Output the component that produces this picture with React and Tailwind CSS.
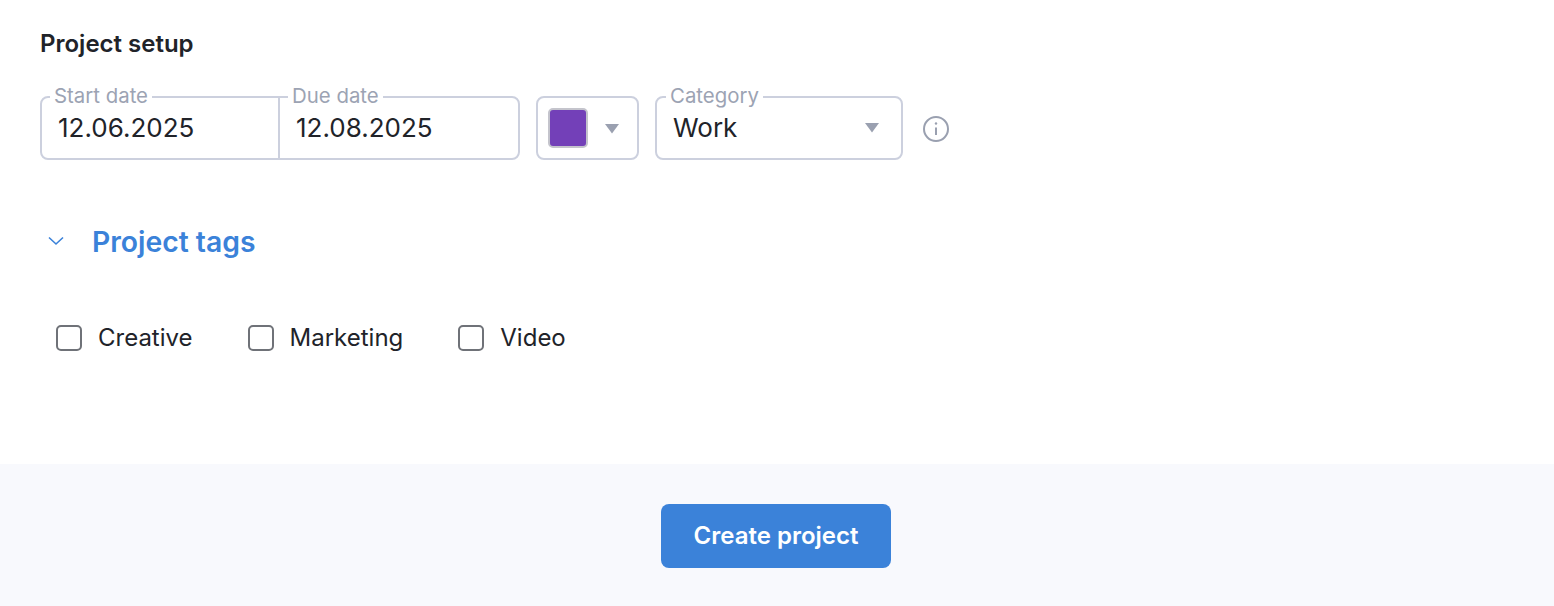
import React from "react";

const font = { fontFamily: "Inter, sans-serif" };

function Caret() {
  return (
    <svg width="16" height="11" viewBox="0 0 16 11" className="shrink-0">
      <path d="M1 1h14L8 10.5z" fill="#9aa0b0" />
    </svg>
  );
}

function FloatingLabel({ left, children }) {
  return (
    <span className={`absolute top-[-14px] ${left} bg-white px-1 text-[20.4px] leading-6 text-[#9ca3b3]`}>
      {children}
    </span>
  );
}

function Tag({ label }) {
  return (
    <label className="flex items-center gap-[16px]">
      <span className="h-[26px] w-[26px] rounded-[5px] border-2 border-[#6f7278] bg-white" />
      <span className="text-[24px] leading-8 text-[#212329]">{label}</span>
    </label>
  );
}

export default function App() {
  return (
    <div className="flex h-[606px] flex-col bg-white" style={font}>
      <div className="h-[464px] pl-[40px] pt-[29px]">
        <h2 className="text-[24px] font-semibold leading-[30px] text-[#212329]">Project setup</h2>

        <div className="mt-[37px] flex items-center">
          <div className="relative flex h-[64px] w-[480px] rounded-[8px] border-2 border-[#ccd0de]">
            <FloatingLabel left="left-[8px]">Start date</FloatingLabel>
            <div className="flex w-[238px] items-center border-r-2 border-[#ccd0de] pb-[2px] pl-[16px] text-[26px] text-[#212329]">
              12.06.2025
            </div>
            <div className="relative flex flex-1 items-center pb-[2px] pl-[16px] text-[26px] text-[#212329]">
              <FloatingLabel left="left-[8px]">Due date</FloatingLabel>
              12.08.2025
            </div>
          </div>

          <div className="ml-[16px] flex h-[64px] w-[103px] items-center rounded-[8px] border-2 border-[#ccd0de] pl-[10px]">
            <span className="h-[40px] w-[40px] rounded-[5px] border-2 border-[#c4c4cc] bg-[#7340b8]" />
            <span className="ml-[16px]">
              <Caret />
            </span>
          </div>

          <div className="relative ml-[16px] flex h-[64px] w-[248px] items-center justify-between rounded-[8px] border-2 border-[#ccd0de] pb-[2px] pl-[16px] pr-[21px] text-[26px] text-[#212329]">
            <FloatingLabel left="left-[9px]">Category</FloatingLabel>
            Work
            <Caret />
          </div>

          <svg width="28" height="28" viewBox="0 0 28 28" className="ml-[19px] mt-[2px]" fill="none" stroke="#9aa0b0" strokeWidth="2">
            <circle cx="14" cy="14" r="12" />
            <path d="M14 12.5v7.5" />
            <circle cx="14" cy="8.5" r="1.2" fill="#9aa0b0" stroke="none" />
          </svg>
        </div>

        <div className="mt-[64px] flex items-center">
          <svg width="18" height="10" viewBox="0 0 18 10" className="mb-[3px] ml-[7px]" fill="none" stroke="#3b82d9" strokeWidth="1.6">
            <path d="M2 1.5 9 8l7-6.5" />
          </svg>
          <span className="ml-[27px] text-[28.3px] font-semibold leading-9 text-[#3b82d9]">Project tags</span>
        </div>

        <div className="ml-[16px] mt-[62px] flex gap-[55px]">
          <Tag label="Creative" />
          <Tag label="Marketing" />
          <Tag label="Video" />
        </div>
      </div>

      <div className="flex flex-1 justify-center bg-[#f8f9fd] pr-[2px] pt-[40px]">
        <button className="h-[64px] w-[230px] rounded-[8px] bg-[#3b82d9] text-[24px] font-semibold text-white">
          Create project
        </button>
      </div>
    </div>
  );
}
